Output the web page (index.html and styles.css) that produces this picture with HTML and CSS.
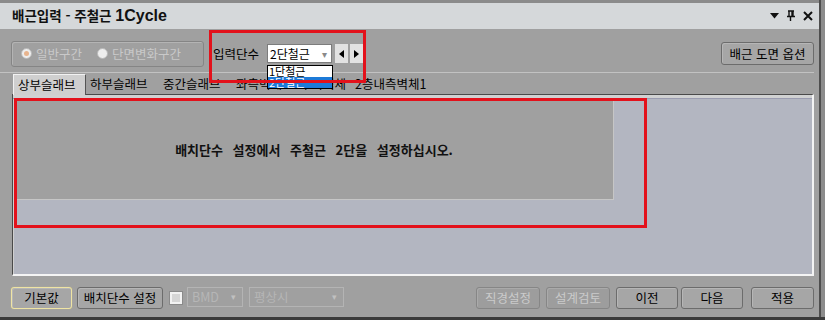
FILE: index.html
```html
<!DOCTYPE html>
<html lang="ko">
<head>
<meta charset="utf-8">
<title>배근입력</title>
<link rel="stylesheet" href="styles.css">
</head>
<body>
<div class="frame">
  <div class="main">
    <div class="topband"></div>
    <div class="titlebar">
      <div class="title">배근입력 - 주철근 <span class="cyc">1Cycle</span></div>
      <div class="ticons">
        <svg width="9" height="6" viewBox="0 0 9 6"><path d="M0 0H9L4.5 5.5Z" fill="#111"/></svg>
        <svg width="10" height="12" viewBox="0 0 10 12"><path d="M2 1H8M3 1V6M6 1V6M7 1V6M1 6.5H9M4.5 6.5V11" stroke="#111" stroke-width="1.4" fill="none"/></svg>
        <svg width="10" height="10" viewBox="0 0 10 10"><path d="M1 1L9 9M9 1L1 9" stroke="#111" stroke-width="2"/></svg>
      </div>
    </div>
    <div class="body">
      <div class="toolbar">
        <div class="groupbox">
          <span class="radio"><span class="rc on"></span>일반구간</span>
          <span class="radio"><span class="rc"></span>단면변화구간</span>
        </div>
        <span class="lbl">입력단수</span>
        <div class="combo">
          <span class="cv">2단철근</span><span class="carr">▾</span>
          <div class="droplist">
            <div class="item">1단철근</div>
            <div class="item sel">2단철근</div>
          </div>
        </div>
        <div class="spin">
          <span class="sb"><svg width="5" height="8" viewBox="0 0 5 8"><path d="M5 0V8L0 4Z" fill="#000"/></svg></span>
          <span class="sb"><svg width="5" height="8" viewBox="0 0 5 8"><path d="M0 0V8L5 4Z" fill="#000"/></svg></span>
        </div>
        <div class="spacer"></div>
        <button class="btn opt">배근 도면 옵션</button>
      </div>
      <div class="sep"></div>
      <div class="tabs">
        <span class="tab active">상부슬래브</span>
        <span class="tab t73">하부슬래브</span>
        <span class="tab t73">중간슬래브</span>
        <span class="tab t64">좌측벽체</span>
        <span class="tab t55">우측벽체</span>
        <span class="tab">2층내측벽체1</span>
      </div>
      <div class="panel">
        <div class="panel-top"></div>
        <div class="msgbox">배치단수 설정에서 주철근 2단을 설정하십시오.</div>
      </div>
      <div class="bottom">
        <button class="btn focus w61">기본값</button>
        <button class="btn w86">배치단수 설정</button>
        <span class="chk"></span>
        <div class="dcombo w56"><span>BMD</span><span class="darr">▾</span></div>
        <div class="dcombo w95"><span>평상시</span><span class="darr">▾</span></div>
        <div class="spacer"></div>
        <button class="btn dis w64">직경설정</button>
        <button class="btn dis w64 g6">설계검토</button>
        <button class="btn w62 g6">이전</button>
        <button class="btn w62 g3">다음</button>
        <button class="btn w63 g8">적용</button>
      </div>
    </div>
    <div class="botband"></div>
  </div>
  <div class="edge"></div>
  <div class="redbox r1"></div>
  <div class="redbox r2"></div>
</div>
</body>
</html>
```

FILE: styles.css
```css
* { box-sizing: border-box; }
html, body { margin: 0; padding: 0; }
body {
  width: 825px;
  height: 320px;
  overflow: hidden;
  background: #a0a0a0;
  font-family: "Noto Sans CJK KR", "Noto Sans", sans-serif;
  font-size: 12px;
  color: #000;
}
.frame {
  position: relative;
  display: flex;
  width: 825px;
  height: 320px;
}
.main {
  width: 819px;
  display: flex;
  flex-direction: column;
}
.edge {
  width: 6px;
  background: #8c8c8c;
  border-left: 2px solid #4e4e4e;
}
.topband { height: 3px; background: #8b8b8b; }
.titlebar {
  height: 26px;
  background: #d5d8da;
  display: flex;
  align-items: center;
  padding-left: 12px;
  padding-right: 6px;
}
.title {
  font-weight: bold;
  font-size: 13.5px;
  line-height: 26px;
  color: #111;
  flex: 1;
  white-space: nowrap;
}
.cyc {
  font-family: "Liberation Sans", Arial, sans-serif;
  font-size: 16px;
  font-weight: bold;
}
.ticons { display: flex; align-items: center; gap: 7px; }
.ticons svg { display: block; }
.body {
  flex: 1;
  display: flex;
  flex-direction: column;
  padding: 0 5px 0 0;
}
.toolbar {
  height: 43px;
  padding: 7px 0 0 11px;
  display: flex;
  align-items: center;
  align-self: stretch;
}
.toolbar > * { flex-shrink: 0; }
.groupbox {
  width: 193px;
  height: 26px;
  border: 1px solid #858585;
  border-radius: 3px;
  box-shadow: inset 1px 1px 0 #b4b4b4;
  display: flex;
  align-items: center;
  padding-left: 9px;
  color: #c9c9c9;
  line-height: 14px;
  font-size: 12.5px;
}
.radio { display: flex; align-items: center; gap: 4px; }
.radio + .radio { margin-left: 15px; }
.rc {
  width: 11px; height: 11px;
  border-radius: 50%;
  background: #eeeeee;
  border: 1px solid #b8b8b8;
  position: relative;
}
.rc.on::after {
  content: "";
  position: absolute;
  left: 2px; top: 2px;
  width: 5px; height: 5px;
  border-radius: 50%;
  background: #e8b48e;
}
.lbl { margin-left: 9px; line-height: 14px; font-size: 12.5px; }
.combo {
  position: relative;
  margin-left: 8px;
  width: 65px;
  height: 19px;
  background: #fff;
  border: 1px solid #7c7c7c;
  display: flex;
  align-items: center;
  padding-left: 2px;
  line-height: 14px;
}
.cv { flex: 1; }
.carr { color: #8a8a8a; font-size: 10px; margin-right: 4px; }
.droplist {
  position: absolute;
  left: -1px;
  top: 20px;
  width: 66px;
  background: #fff;
  border: 1px solid #000;
}
.item { height: 11px; line-height: 11px; padding-left: 1px; overflow: hidden; font-size: 11px; }
.item.sel { background: #1c7ad8; color: #fff; }
.spin { display: flex; gap: 2px; margin-left: 3px; }
.sb {
  width: 13px; height: 19px;
  background: #e2e2e2;
  display: flex; align-items: center; justify-content: center;
}
.sb svg { display: block; }
.spacer { flex: 1; }
.btn {
  font-family: "Noto Sans CJK KR", "Noto Sans", sans-serif;
  font-size: 12.5px;
  line-height: 14px;
  height: 22px;
  padding: 0;
  background: #a6a6a6;
  border: 1px solid #6c6c6c;
  border-radius: 3px;
  box-shadow: inset 1px 1px 0 #b6b6b6;
  color: #000;
}
.opt { width: 93px; height: 23px; }
.sep { height: 1px; background: #c2c2c2; margin-top: 0; }
.tabs {
  height: 21px;
  display: flex;
  align-items: flex-end;
  padding-left: 13px;
  line-height: 14px;
}
.tab {
  height: 20px;
  display: flex;
  align-items: center;
  padding: 0 0 0 4px;
  font-size: 12.5px;
  white-space: nowrap;
  flex-shrink: 0;
}
.t73 { width: 73px; }
.t64 { width: 64px; }
.t55 { width: 55px; }
.tab.active {
  width: 73px;
  height: 21px;
  background: #cfcfcf;
  border-top: 1px solid #f2f2f2;
  border-left: 1px solid #f2f2f2;
  border-right: 1px solid #555;
  position: relative;
  top: 1px;
}
.panel {
  margin-left: 12px;
  height: 182px;
  background: #b3b6c1;
  border-top: 1px solid #4a4a4a;
  border-left: 1px solid #4a4a4a;
  border-right: 2px solid #f4f4f4;
  border-bottom: 2px solid #f4f4f4;
  box-shadow: inset 1px 0 0 #d0d0d0;
}
.panel-top { height: 4px; background: #d0d1d2; border-bottom: 1px solid #9a9cb0; }
.msgbox {
  margin: 1px 0 0 4px;
  width: 597px;
  height: 100px;
  background: #a0a0a0;
  border-right: 1px solid #c6c6c6;
  border-bottom: 1px solid #c6c6c6;
  display: flex;
  align-items: center;
  justify-content: center;
  font-weight: bold;
  font-size: 13px;
  word-spacing: 6px;
  color: #111;
  padding-right: 2px;
}
.bottom {
  height: 41px;
  padding: 11px 0 0 11px;
  display: flex;
  align-items: flex-start;
}
.bottom > * { flex-shrink: 0; }
.bottom .btn + .btn { margin-left: 5px; }
.focus { border-color: #efe4a4; box-shadow: 0 0 1px #d8cc80, inset 1px 1px 0 #b6b6b6; }
.w61 { width: 61px; }
.w86 { width: 86px; }
.w64 { width: 64px; }
.w62 { width: 62px; }
.w63 { width: 63px; }
.w56 { width: 56px; }
.w95 { width: 95px; }
.bottom .btn.g6 { margin-left: 6px; }
.bottom .btn.g3 { margin-left: 3px; }
.bottom .btn.g8 { margin-left: 8px; }
.chk {
  margin: 5px 0 0 7px;
  width: 12px; height: 12px;
  border: 2px solid #f2f2f2;
  background: #d6d6d6;
  box-shadow: 0 0 0 1px #8a8a8a;
}
.dcombo {
  margin-left: 5px;
  height: 20px;
  border: 1px solid #b4b4b4;
  display: flex;
  align-items: center;
  padding-left: 4px;
  color: #b6b6b6;
  line-height: 14px;
  font-size: 12.5px;
}
.dcombo + .dcombo { margin-left: 6px; }
.dcombo span:first-child { flex: 1; }
.darr { font-size: 9px; margin-right: 6px; color: #c0c0c0; }
.dis {
  background: #9d9d9d;
  border-color: #868686;
  color: #cbcbcb;
  box-shadow: inset 1px 1px 0 #aaaaaa;
}
.botband { height: 4px; background: #3b3b3b; margin-right: -6px; position: relative; }
.redbox {
  position: absolute;
  border: 3px solid #e3111b;
  pointer-events: none;
}
.r1 { left: 209px; top: 30px; width: 157px; height: 53px; }
.r2 { left: 14px; top: 98px; width: 633px; height: 130px; }
```
